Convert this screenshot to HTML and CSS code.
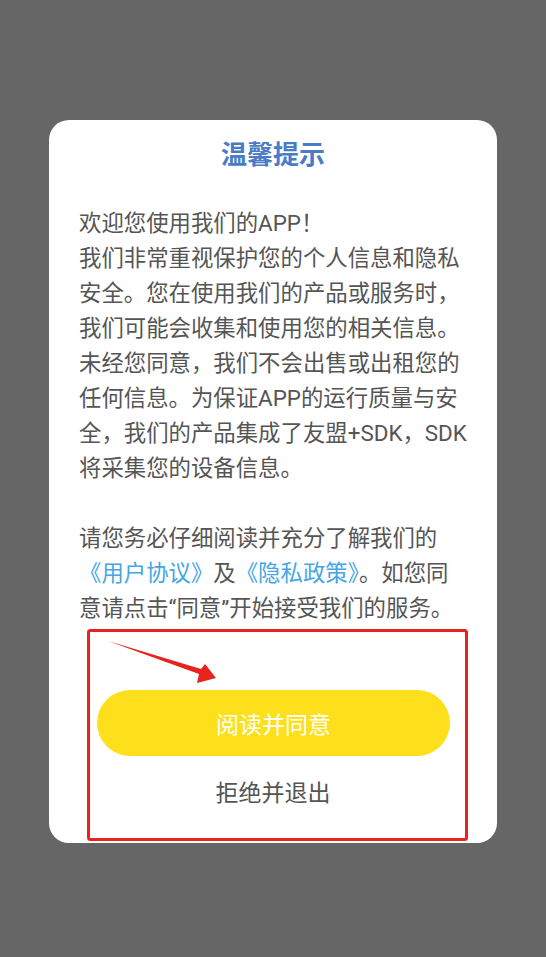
FILE: index.html
```html
<!DOCTYPE html>
<html lang="zh-CN">
<head>
<meta charset="utf-8">
<title>温馨提示</title>
<link rel="stylesheet" href="styles.css">
</head>
<body>
<div class="dialog">
  <h1 class="title">温馨提示</h1>
  <div class="content">
    <p>欢迎您使用我们的APP！<br>我们非常重视保护您的个人信息和隐私<br>安全。您在使用我们的产品或服务时，<br>我们可能会收集和使用您的相关信息。<br>未经您同意，我们不会出售或出租您的<br>任何信息。为保证APP的运行质量与安<br>全，我们的产品集成了友盟+SDK，SDK<br>将采集您的设备信息。</p>
    <p class="gap">请您务必仔细阅读并充分了解我们的<br><a class="link">《用户协议》</a>及<a class="link">《隐私政策》</a>。如您同<br>意请点击“同意”开始接受我们的服务。</p>
  </div>
  <div class="actions">
    <button class="agree">阅读并同意</button>
    <button class="reject">拒绝并退出</button>
  </div>
  <svg class="annotation" viewBox="49 120 448 723" aria-hidden="true">
    <rect x="88.5" y="630.5" width="378" height="209" rx="2" fill="none" stroke="#e8221d" stroke-width="3"/>
    <polygon points="108,641 201,669 205,664 216,678 197,683 199,674" fill="#e8221d"/>
  </svg>
</div>
</body>
</html>
```
FILE: styles.css
```css
html, body {
  margin: 0;
  padding: 0;
}
body {
  background: #666666;
  width: 546px;
  height: 957px;
  overflow: hidden;
  font-family: Roboto, "Noto Sans CJK SC", sans-serif;
}
.dialog {
  position: relative;
  box-sizing: border-box;
  margin: 120px 0 0 49px;
  width: 448px;
  height: 723px;
  background: #ffffff;
  border-radius: 20px;
  padding: 17px 0 0 0;
  display: flex;
  flex-direction: column;
}
.title {
  margin: 0;
  text-align: center;
  font-size: 26px;
  line-height: 36px;
  font-weight: 700;
  color: #4a7bc6;
}
.content {
  margin-top: 33px;
  padding: 0 0 0 30px;
  color: #555555;
  font-size: 22.4px;
  line-height: 35px;
  white-space: nowrap;
}
.content p {
  margin: 0;
}
.content .gap {
  margin-top: 35px;
}
.link {
  color: #44a6e6;
  text-decoration: none;
}
.actions {
  margin-top: 64px;
  display: flex;
  flex-direction: column;
  align-items: center;
}
.agree,
.reject {
  font-family: Roboto, "Noto Sans CJK SC", sans-serif;
  font-size: 23px;
  border: 0;
  padding: 0;
  cursor: pointer;
}
.agree {
  width: 353px;
  height: 66px;
  margin-left: 1px;
  border-radius: 33px;
  background: #fde01b;
  color: #ffffff;
}
.reject {
  width: 353px;
  height: 70px;
  background: transparent;
  color: #555555;
}
.annotation {
  position: absolute;
  left: 0;
  top: 0;
  width: 448px;
  height: 723px;
  pointer-events: none;
}
```
